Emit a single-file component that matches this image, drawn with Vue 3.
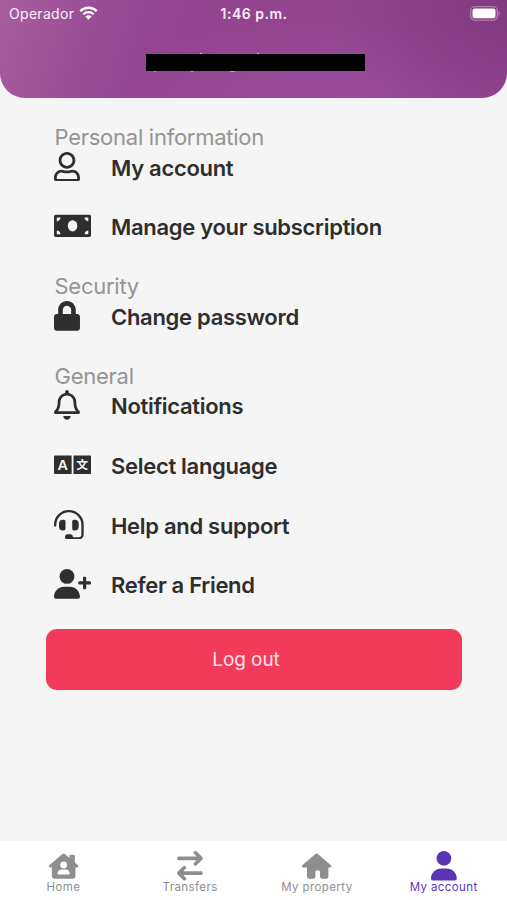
<script setup>
    import { ref } from 'vue'

    const sections = [
        {
            title: 'Personal information',
            items: [
                { label: 'My account', icon: 'user', width: 448 },
                { label: 'Manage your subscription', icon: 'money', width: 640 },
            ],
        },
        {
            title: 'Security',
            items: [{ label: 'Change password', icon: 'lock', width: 448 }],
        },
        {
            title: 'General',
            items: [
                { label: 'Notifications', icon: 'bell', width: 448 },
                { label: 'Select language', icon: 'language', width: 640 },
                { label: 'Help and support', icon: 'headset', width: 512 },
                { label: 'Refer a Friend', icon: 'refer', width: 640 },
            ],
        },
    ]

    const tabs = [
        { label: 'Home', icon: 'home-user', viewBox: '-28 -18 632 560' },
        { label: 'Transfers', icon: 'transfers', viewBox: '0 0 448 512' },
        { label: 'My property', icon: 'home', viewBox: '-28 -18 632 560' },
        { label: 'My account', icon: 'account', viewBox: '0 0 448 512' },
    ]

    const active = ref('My account')

    const userPath =
        'M313.6 304c-28.7 0-42.5 16-89.6 16-47.1 0-60.8-16-89.6-16C60.2 304 0 364.2 0 438.4V464c0 26.5 21.5 48 48 48h352c26.5 0 48-21.5 48-48v-25.6c0-74.2-60.2-134.4-134.4-134.4zM400 464H48v-25.6c0-47.6 38.8-86.4 86.4-86.4 14.6 0 38.3 16 89.6 16 51.7 0 74.9-16 89.6-16 47.6 0 86.4 38.8 86.4 86.4V464zM224 288c79.5 0 144-64.5 144-144S303.5 0 224 0 80 64.5 80 144s64.5 144 144 144zm0-240c52.9 0 96 43.1 96 96s-43.1 96-96 96-96-43.1-96-96 43.1-96 96-96z'
    const lockPath =
        'M400 224h-24v-72C376 68.2 307.8 0 224 0S72 68.2 72 152v72H48c-26.5 0-48 21.5-48 48v192c0 26.5 21.5 48 48 48h352c26.5 0 48-21.5 48-48V272c0-26.5-21.5-48-48-48zm-104 0H152v-72c0-39.7 32.3-72 72-72s72 32.3 72 72v72z'
    const bellPath =
        'M439.39 362.29c-19.32-20.76-55.47-51.99-55.47-154.29 0-77.7-54.48-139.9-127.94-155.16V32c0-17.67-14.32-32-31.98-32s-31.98 14.33-31.98 32v20.84C118.56 68.1 64.08 130.3 64.08 208c0 102.3-36.15 133.53-55.47 154.29-6 6.45-8.66 14.16-8.61 21.71.11 16.4 12.98 32 32.1 32h383.8c19.12 0 32-15.6 32.1-32 .05-7.55-2.61-15.27-8.61-21.71zM67.53 368c21.22-27.97 44.42-74.33 44.53-159.42 0-.2-.06-.38-.06-.58 0-61.86 50.14-112 112-112s112 50.14 112 112c0 .2-.06.38-.06.58.11 85.1 23.31 131.46 44.53 159.42H67.53zM224 512c35.32 0 63.97-28.65 63.97-64H160.03c0 35.35 28.65 64 63.97 64z'
    const bodyPath =
        'M274.7 304H173.3C77.61 304 0 381.6 0 477.3c0 19.14 15.52 34.67 34.66 34.67h378.7C432.5 512 448 496.5 448 477.3C448 381.6 370.4 304 274.7 304z'
</script>

<template>
    <div class="screen">
        <header class="header">
            <div class="status-bar">
                <div class="carrier">
                    <span>Operador</span>
                    <svg class="wifi" viewBox="0 0 18 14" aria-hidden="true">
                        <g fill="none" stroke="currentColor" stroke-width="2.3">
                            <path d="M.8 5.1a11.7 11.7 0 0 1 16.4 0" />
                            <path d="M3.9 8.3a7.2 7.2 0 0 1 10.2 0" />
                        </g>
                        <path d="M9 13.8 5.9 10.6a4.4 4.4 0 0 1 6.2 0z" fill="currentColor" />
                    </svg>
                </div>
                <span class="time">1:46 p.m.</span>
                <svg class="battery" viewBox="0 0 31 15" aria-hidden="true">
                    <rect x=".7" y=".7" width="26.6" height="13.4" rx="4" fill="none" stroke="#fff" stroke-opacity=".35" stroke-width="1.3" />
                    <rect x="2.5" y="2.5" width="23" height="9.8" rx="2.2" fill="#fff" />
                    <path d="M28.6 5.2c1.6.6 1.6 3.8 0 4.4z" fill="#fff" fill-opacity=".4" />
                </svg>
            </div>
            <!-- name is covered, only letter tips show around the bar -->
            <svg class="masked-name" viewBox="0 0 219 19" aria-hidden="true">
                <path
                    d="M54 .6h2M111 .6h2M8 18.2h2M44.5 18.2h3M84 18.2h5"
                    stroke="#fff"
                    stroke-opacity=".6"
                    stroke-width="1.2"
                />
                <rect y="1" width="219" height="17" />
            </svg>
        </header>

        <main class="content">
            <section v-for="section in sections" :key="section.title">
                <h2 class="section-title">{{ section.title }}</h2>
                <button v-for="item in section.items" :key="item.label" class="row">
                    <span class="row-icon">
                        <svg :viewBox="`0 0 ${item.width} 512`" fill="currentColor" aria-hidden="true">
                            <path v-if="item.icon === 'user'" :d="userPath" />
                            <template v-else-if="item.icon === 'money'">
                                <rect y="64" width="640" height="384" rx="34" />
                                <ellipse cx="320" cy="256" rx="82" ry="98" fill="#f5f5f5" />
                                <path
                                    d="M48 112h64c0 35-29 64-64 64zM592 112h-64c0 35 29 64 64 64zM48 400h64c0-35-29-64-64-64zM592 400h-64c0-35 29-64 64-64z"
                                    fill="#f5f5f5"
                                />
                            </template>
                            <path v-else-if="item.icon === 'lock'" :d="lockPath" />
                            <path v-else-if="item.icon === 'bell'" :d="bellPath" />
                            <template v-else-if="item.icon === 'language'">
                                <path d="M24 96h280v320H24a24 24 0 0 1-24-24V120a24 24 0 0 1 24-24zM336 96h280a24 24 0 0 1 24 24v272a24 24 0 0 1-24 24H336z" />
                                <text class="glyph-latin" x="150" y="346" text-anchor="middle">A</text>
                                <text class="glyph-cjk" x="488" y="332" text-anchor="middle">文</text>
                            </template>
                            <template v-else-if="item.icon === 'headset'">
                                <path
                                    d="M20 268v-12a236 236 0 0 1 472 0v166a66 66 0 0 1-66 66H260"
                                    fill="none"
                                    stroke="currentColor"
                                    stroke-width="40"
                                    stroke-linecap="round"
                                />
                                <path
                                    d="M154 168h16q28 0 28 28v128q0 28-28 28h-16q-68 0-68-68v-48q0-68 68-68zM358 168h-16q-28 0-28 28v128q0 28 28 28h16q68 0 68-68v-48q0-68-68-68z"
                                />
                                <rect x="190" y="418" width="136" height="92" rx="46" />
                            </template>
                            <template v-else>
                                <circle cx="224" cy="128" r="128" />
                                <path :d="bodyPath" />
                                <path
                                    d="M528 156v168M444 240h168"
                                    fill="none"
                                    stroke="currentColor"
                                    stroke-width="56"
                                    stroke-linecap="round"
                                />
                            </template>
                        </svg>
                    </span>
                    <span class="row-label">{{ item.label }}</span>
                </button>
            </section>
            <button class="logout">Log out</button>
        </main>

        <nav class="tab-bar">
            <button
                v-for="tab in tabs"
                :key="tab.label"
                class="tab"
                :class="{ 'is-active': active === tab.label }"
                @click="active = tab.label"
            >
                <svg :viewBox="tab.viewBox" fill="currentColor" aria-hidden="true">
                    <template v-if="tab.icon === 'home-user'">
                        <path
                            d="M266 40q22-18 44 0l88 74V80q0-28 28-28h46q28 0 28 28v120l60 52q20 18 4 34-8 8-22 8h-30v160q0 56-56 56H120q-56 0-56-56V294H34q-14 0-22-8-16-16 4-34z"
                        />
                        <circle cx="288" cy="246" r="64" fill="#fff" />
                        <path d="M252 332h72c49 0 80 32 80 78q0 16-16 16H188q-16 0-16-16c0-46 31-78 80-78z" fill="#fff" />
                    </template>
                    <g
                        v-else-if="tab.icon === 'transfers'"
                        fill="none"
                        stroke="currentColor"
                        stroke-width="62"
                        stroke-linecap="round"
                        stroke-linejoin="round"
                    >
                        <path d="M32 128h383M320 32l96 96-96 96" />
                        <path d="M416 384H33M128 288l-96 96 96 96" />
                    </g>
                    <path
                        v-else-if="tab.icon === 'home'"
                        d="M266 40q22-18 44 0l250 212q20 18 4 34-8 8-22 8h-30v174q0 42-42 42h-76q-42 0-42-42v-92q0-24-24-24h-40q-24 0-24 24v92q0 42-42 42h-76q-42 0-42-42V294H34q-14 0-22-8-16-16 4-34z"
                    />
                    <template v-else>
                        <circle cx="224" cy="128" r="128" />
                        <path :d="bodyPath" />
                    </template>
                </svg>
                <span>{{ tab.label }}</span>
            </button>
        </nav>
    </div>
</template>

<style>
    body {
        margin: 0;
        background: #f5f5f5;
    }
</style>

<style scoped>
    .screen {
        display: flex;
        flex-direction: column;
        height: 900px;
        background: #f5f5f5;
        font-family: Inter, 'Liberation Sans', sans-serif;
        color: #2e2e2e;
    }
    button {
        margin: 0;
        padding: 0;
        border: 0;
        background: none;
        color: inherit;
        font: inherit;
        cursor: pointer;
    }

    .header {
        box-sizing: border-box;
        height: 97.5px;
        flex-shrink: 0;
        border-radius: 0 0 25px 25px;
        background:
            radial-gradient(circle at 100% 0, rgba(125, 54, 125, 0.75), transparent 170px),
            radial-gradient(ellipse 240px 90px at 350px 105px, rgba(160, 80, 163, 0.65), transparent),
            linear-gradient(105deg, #a75d9f 0, #9c5099 80px, #934592 150px, #93448f 300px, #914492 100%);
        color: #fbeffa;
    }
    .status-bar {
        display: grid;
        grid-template-columns: 1fr auto 1fr;
        align-items: center;
        height: 27px;
        padding: 0 6px 0 9px;
        font-size: 14px;
    }
    .carrier {
        display: flex;
        align-items: center;
        gap: 4.5px;
        letter-spacing: 0.3px;
    }
    .wifi {
        width: 19px;
        height: 14px;
        margin-top: -1px;
        color: #fff;
    }
    .time {
        margin-right: 2px;
        font-weight: 600;
        letter-spacing: 0.5px;
    }
    .battery {
        justify-self: end;
        width: 31px;
        height: 15px;
    }
    .masked-name {
        display: block;
        width: 219px;
        height: 19px;
        margin: 26px 0 0 146px;
    }

    .content {
        flex: 1;
        padding: 24.5px 45px 0 46px;
    }
    .section-title {
        height: 29.75px;
        margin: 0 0 0 8.5px;
        font-size: 22px;
        font-weight: 400;
        line-height: 30.5px;
        letter-spacing: -0.26px;
        color: #949494;
    }
    .row {
        display: flex;
        align-items: flex-start;
        width: 100%;
        height: 59.7px;
        padding-left: 8px;
        text-align: left;
    }
    .row-icon {
        width: 57px;
        flex-shrink: 0;
    }
    .row-icon svg {
        display: block;
        height: 29.7px;
    }
    .row-label {
        font-size: 22px;
        font-weight: 570;
        line-height: 33.6px;
        letter-spacing: -0.3px;
        white-space: nowrap;
    }
    .glyph-latin {
        fill: #f5f5f5;
        font: 700 250px 'Liberation Sans', sans-serif;
    }
    .glyph-cjk {
        fill: #f5f5f5;
        font: 700 205px 'Noto Sans CJK SC', sans-serif;
    }

    .logout {
        display: block;
        width: 100%;
        height: 61px;
        padding-right: 16px;
        border-radius: 11px;
        background: #f23a5a;
        color: #ffe3e8;
        font-size: 19px;
        letter-spacing: -0.1px;
    }

    .tab-bar {
        display: grid;
        grid-template-columns: repeat(4, 1fr);
        height: 59px;
        flex-shrink: 0;
        background: #fff;
    }
    .tab {
        display: flex;
        flex-direction: column;
        align-items: center;
        padding-top: 10px;
        color: #8e8e8e;
        font-size: 11.5px;
        line-height: 12px;
        letter-spacing: 0.4px;
    }
    .tab svg {
        height: 29.5px;
    }
    .tab.is-active {
        color: #5c35b5;
    }
</style>
